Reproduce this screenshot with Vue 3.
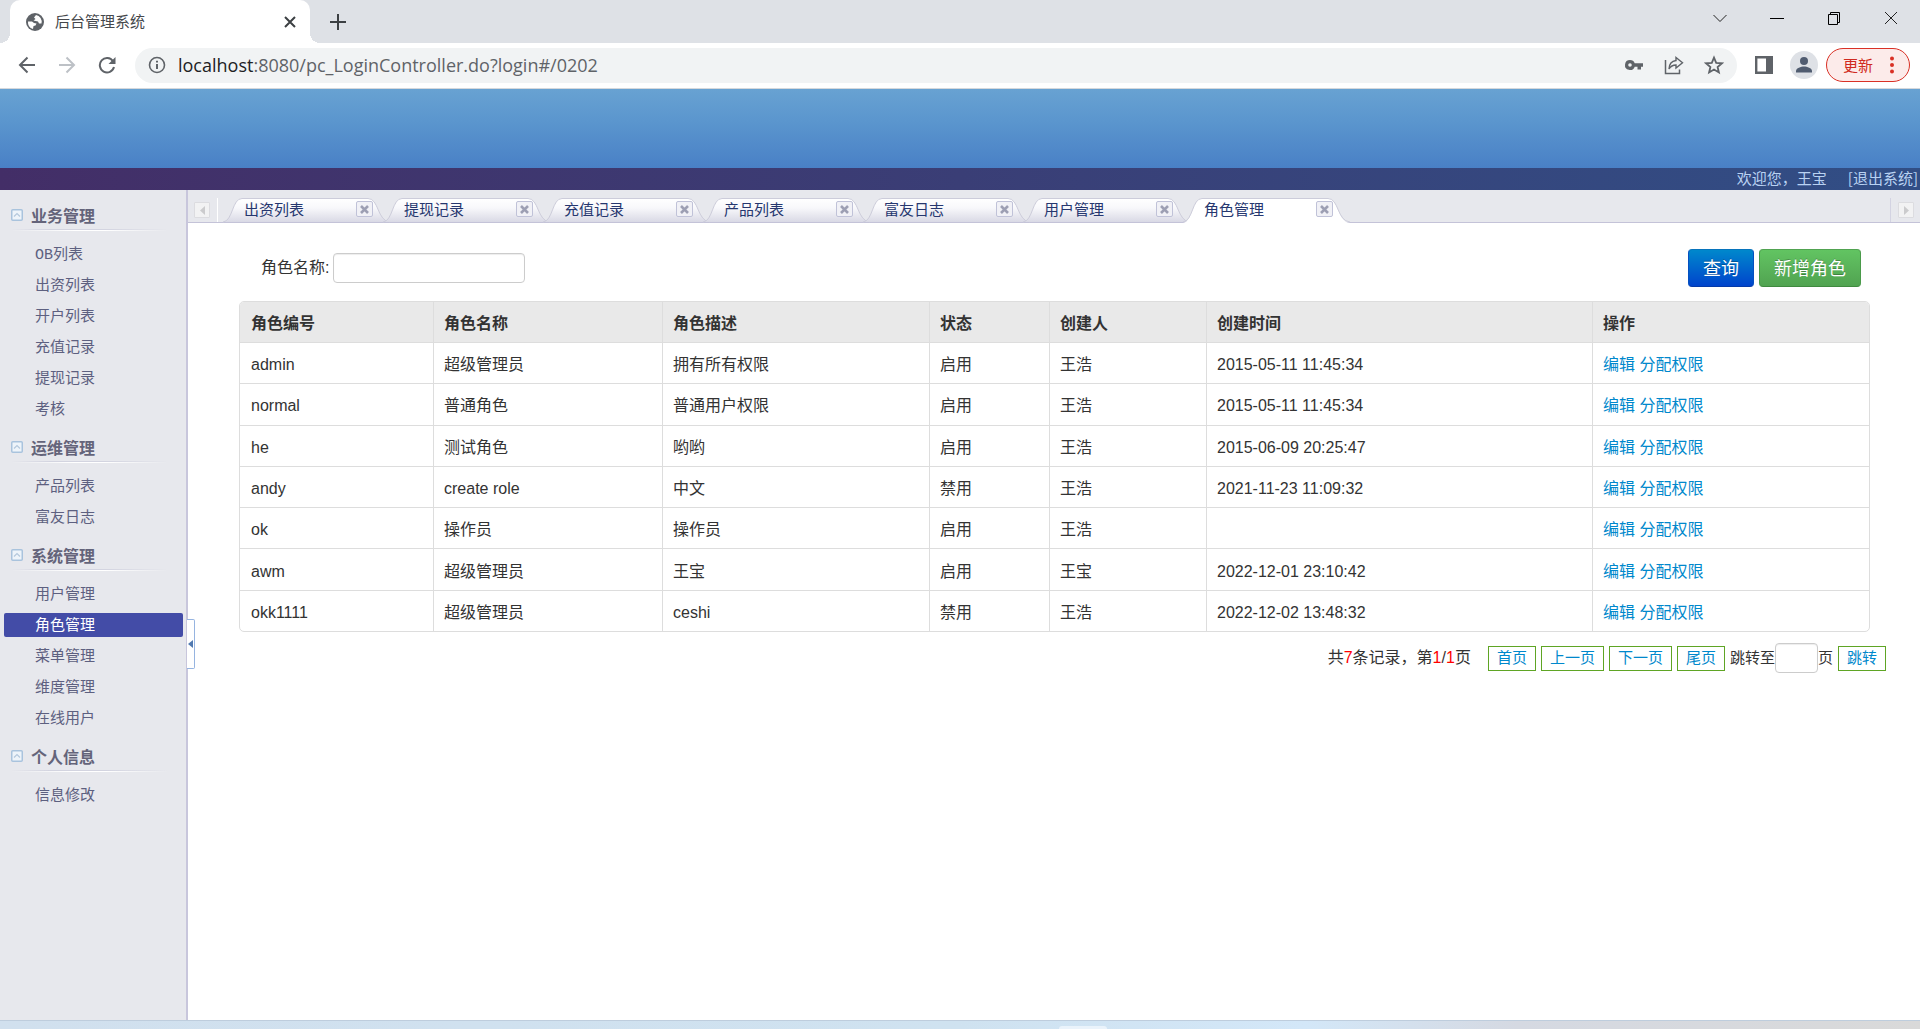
<script setup>
import { ref } from 'vue'

const keyword = ref('')
const page = ref('')

const menus = [
  { title: '业务管理', items: ['OB列表', '出资列表', '开户列表', '充值记录', '提现记录', '考核'] },
  { title: '运维管理', items: ['产品列表', '富友日志'] },
  { title: '系统管理', items: ['用户管理', '角色管理', '菜单管理', '维度管理', '在线用户'] },
  { title: '个人信息', items: ['信息修改'] },
]
const active = '角色管理'

const tabs = ['出资列表', '提现记录', '充值记录', '产品列表', '富友日志', '用户管理', '角色管理']

const columns = ['角色编号', '角色名称', '角色描述', '状态', '创建人', '创建时间', '操作']
const rows = [
  ['admin', '超级管理员', '拥有所有权限', '启用', '王浩', '2015-05-11 11:45:34'],
  ['normal', '普通角色', '普通用户权限', '启用', '王浩', '2015-05-11 11:45:34'],
  ['he', '测试角色', '哟哟', '启用', '王浩', '2015-06-09 20:25:47'],
  ['andy', 'create role', '中文', '禁用', '王浩', '2021-11-23 11:09:32'],
  ['ok', '操作员', '操作员', '启用', '王浩', ''],
  ['awm', '超级管理员', '王宝', '启用', '王宝', '2022-12-01 23:10:42'],
  ['okk1111', '超级管理员', 'ceshi', '禁用', '王浩', '2022-12-02 13:48:32'],
]
</script>

<template>
  <div class="screen">
    <div class="tabstrip">
      <div class="btab">
        <svg class="globe" width="18" height="18" viewBox="0 0 18 18">
          <circle cx="9" cy="9" r="9" fill="#5f6368" />
          <path d="M2 8.500 L6 8.500 L8 10 L10.500 10.500 L9.500 12.500 L7.500 13 L7 16 A7.200 7.200 0 0 1 2 8.500 Z M10 2 L8 4.500 L9.500 6 L7.500 7.500 L12 8.500 L13 10.500 L15.500 10.500 A7 7 0 0 0 10 2 Z" fill="#fff" />
        </svg>
        <span class="btitle">后台管理系统</span>
        <button class="plain" aria-label="关闭标签页">
          <svg width="12" height="12" viewBox="0 0 12 12"><path d="M1 1 L11 11 M11 1 L1 11" stroke="#3c4043" stroke-width="2" /></svg>
        </button>
      </div>
      <button class="plain newtab" aria-label="新标签页">
        <svg width="16" height="16" viewBox="0 0 16 16"><path d="M8 0 V16 M0 8 H16" stroke="#3c4043" stroke-width="2" /></svg>
      </button>
      <div class="winctl">
        <button class="plain" aria-label="搜索标签页"><svg width="14" height="14" viewBox="0 0 14 14"><path d="M.5 4 L7 10.500 L13.500 4" stroke="#222" fill="none" /></svg></button>
        <button class="plain" aria-label="最小化"><svg width="14" height="14" viewBox="0 0 14 14"><path d="M0 7.500 H14" stroke="#000" /></svg></button>
        <button class="plain" aria-label="还原"><svg width="14" height="14" viewBox="0 0 14 14"><path d="M1.500 3.500 H10.500 V13.500 H1.500 Z M3.500 3 V1.500 H12.500 V11.500 H11" stroke="#000" fill="none" /></svg></button>
        <button class="plain" aria-label="关闭"><svg width="14" height="14" viewBox="0 0 14 14"><path d="M1 1 L13 13 M13 1 L1 13" stroke="#222" /></svg></button>
      </div>
    </div>

    <div class="toolbar">
      <button class="plain" aria-label="后退"><svg width="18" height="18" viewBox="0 0 18 18"><path d="M17 9 H2 M9.500 1.500 L2 9 L9.500 16.500" stroke="#5f6368" stroke-width="2" fill="none" /></svg></button>
      <button class="plain" aria-label="前进"><svg width="18" height="18" viewBox="0 0 18 18"><path d="M1 9 H16 M8.500 1.500 L16 9 L8.500 16.500" stroke="#bdc1c6" stroke-width="2" fill="none" /></svg></button>
      <button class="plain" aria-label="刷新"><svg width="18" height="18" viewBox="0 0 18 18"><path d="M15 5.200 A7.200 7.200 0 1 0 16 11" stroke="#5f6368" stroke-width="2" fill="none" /><path d="M17.500 1 V8 H10.500 Z" fill="#5f6368" /></svg></button>
      <div class="omnibox">
        <svg width="18" height="18" viewBox="0 0 18 18"><circle cx="9" cy="9" r="7.500" stroke="#5f6368" stroke-width="1.600" fill="none" /><path d="M9 8 V13 M9 4.800 V6.600" stroke="#5f6368" stroke-width="2" /></svg>
        <span class="url"><b>localhost</b>:8080/pc_LoginController.do?login#/0202</span>
        <svg width="20" height="20" viewBox="0 0 20 20"><path d="M6 5 a5 5 0 1 0 4.700 6.700 H13.500 V14.500 H17 V11.700 H19 V8.300 H10.700 A5 5 0 0 0 6 5 Z M6 8.200 a1.800 1.800 0 1 1 0 3.600 a1.800 1.800 0 0 1 0-3.600 Z" fill="#5f6368" fill-rule="evenodd" /></svg>
        <svg width="20" height="20" viewBox="0 0 20 20"><path d="M1.500 5 V18.500 H15.500 V14.500" stroke="#5f6368" stroke-width="1.500" fill="none" /><path d="M12 2.500 L18.500 7.800 L12 13 V10 C8.500 10 6.500 11.500 5 14 C5.200 9.500 7.500 6 12 5.500 Z" stroke="#5f6368" stroke-width="1.400" fill="none" /></svg>
        <svg width="20" height="20" viewBox="0 0 20 20"><path d="M10 2.600 L12.200 7.800 L17.900 8.300 L13.600 12 L14.900 17.500 L10 14.600 L5.100 17.500 L6.400 12 L2.100 8.300 L7.800 7.800 Z" stroke="#5f6368" stroke-width="1.800" fill="none" /></svg>
      </div>
      <button class="plain panel" aria-label="侧边栏"><svg width="18" height="18" viewBox="0 0 18 18"><path d="M1.200 1.200 H16.800 V16.800 H1.200 Z" stroke="#5f6368" stroke-width="2.400" fill="none" /><path d="M11 0 H18 V18 H11 Z" fill="#5f6368" /></svg></button>
      <button class="plain" aria-label="用户"><svg width="28" height="28" viewBox="0 0 28 28"><circle cx="14" cy="14" r="14" fill="#dee1e6" /><circle cx="14" cy="10" r="4" fill="#505c70" /><path d="M6 21.500 V20 C6 17 11 15.500 14 15.500 S22 17 22 20 V21.500 Z" fill="#505c70" /></svg></button>
      <button class="update">更新<svg width="4" height="18" viewBox="0 0 4 18"><circle cx="2" cy="2.500" r="2" fill="#d93025" /><circle cx="2" cy="9" r="2" fill="#d93025" /><circle cx="2" cy="15.500" r="2" fill="#d93025" /></svg></button>
    </div>

    <header class="banner"></header>
    <div class="userbar">
      <span>欢迎您，王宝</span>
      <a href="#">[退出系统]</a>
    </div>

    <div class="body">
      <nav class="side">
        <section v-for="m in menus" :key="m.title">
          <h2>
            <svg width="12" height="12" viewBox="0 0 12 12"><rect x=".75" y=".75" width="10.500" height="10.500" rx="1" fill="#eef4fa" stroke="#a9c3dd" stroke-width="1.500" /><path d="M3 7.500 L6 4.500 L9 7.500" stroke="#b4c8dc" fill="none" stroke-width="1.200" /></svg>
            {{ m.title }}
          </h2>
          <ul>
            <li v-for="i in m.items" :key="i"><a href="#" :class="{ on: i === active }">{{ i }}</a></li>
          </ul>
        </section>
      </nav>

      <main class="main">
        <button class="handle" aria-label="收起菜单"><svg width="5" height="8" viewBox="0 0 5 8"><path d="M5 0 V8 L0 4 Z" fill="#5079b0" /></svg></button>
        <div class="tabs">
          <button class="arrow left" aria-label="向左滚动"><svg width="5" height="9" viewBox="0 0 5 9"><path d="M5 0 V9 L0 4.500 Z" fill="#cbcbcd" /></svg></button>
          <div class="tablist">
            <div v-for="t in tabs" :key="t" class="tab">
              <svg class="shape" width="168" height="25" viewBox="0 0 168 25">
                <defs>
                  <linearGradient id="tabfill" x1="0" y1="0" x2="0" y2="1">
                    <stop offset="0" stop-color="#fff" />
                    <stop offset=".4" stop-color="#f8f8fb" />
                    <stop offset="1" stop-color="#d9d9e5" />
                  </linearGradient>
                </defs>
                <path :d="t === active ? 'M0 25 C10 24 9 .5 19 .5 H145 C156 .5 154 24 167 25 Z' : 'M0 24 C10 23 9 .5 19 .5 H145 C156 .5 154 23 167 24 Z'" :fill="t === active ? '#fff' : 'url(#tabfill)'" />
                <path d="M0 24 C10 23 9 .5 19 .5 H145 C156 .5 154 23 167 24" fill="none" stroke="#ccccda" />
              </svg>
              <a href="#">{{ t }}</a>
              <button class="close" aria-label="关闭"><svg width="9" height="9" viewBox="0 0 9 9"><path d="M1 1 L8 8 M8 1 L1 8" stroke="#9d9fb3" stroke-width="2.600" /></svg></button>
            </div>
          </div>
          <button class="arrow right" aria-label="向右滚动"><svg width="5" height="9" viewBox="0 0 5 9"><path d="M0 0 V9 L5 4.500 Z" fill="#cbcbcd" /></svg></button>
        </div>

        <form class="search" @submit.prevent>
          <label for="role-name">角色名称:</label>
          <input id="role-name" v-model="keyword" type="text" />
          <button class="btn blue" type="submit">查询</button>
          <button class="btn green" type="button">新增角色</button>
        </form>

        <div class="tablewrap">
          <table>
            <colgroup>
              <col class="c1" /><col class="c2" /><col class="c3" /><col class="c4" /><col class="c5" /><col class="c6" /><col class="c7" />
            </colgroup>
            <thead>
              <tr><th v-for="c in columns" :key="c">{{ c }}</th></tr>
            </thead>
            <tbody>
              <tr v-for="r in rows" :key="r[0]">
                <td v-for="(v, n) in r" :key="n">{{ v }}</td>
                <td><a href="#">编辑</a> <a href="#">分配权限</a></td>
              </tr>
            </tbody>
          </table>
        </div>

        <div class="pager">
          <span class="total">共<em>7</em>条记录，第<em>1</em>/<em>1</em>页</span>
          <a class="pg" href="#">首页</a>
          <a class="pg" href="#">上一页</a>
          <a class="pg" href="#">下一页</a>
          <a class="pg" href="#">尾页</a>
          <label class="jump">跳转至<input v-model="page" type="text" />页</label>
          <a class="pg" href="#">跳转</a>
        </div>
      </main>
    </div>

    <footer class="taskbar"><span></span></footer>
  </div>
</template>

<style>
body { margin: 0; }
</style>

<style scoped>
.screen {
  display: flex;
  flex-direction: column;
  min-height: 100vh;
  background: #fff;
  color: #333;
  font: 16px/20px "Liberation Sans", "Noto Sans CJK SC", sans-serif;
}
.screen * { box-sizing: border-box; }
svg { display: block; flex: none; }
a { text-decoration: none; }
.plain { border: 0; padding: 0; background: none; flex: none; }

/* browser window */
.tabstrip { display: flex; height: 43px; background: #dee1e6; }
.btab {
  position: relative;
  display: flex;
  align-items: center;
  width: 300px;
  margin-left: 10px;
  padding: 0 14px 0 16px;
  border-radius: 10px 10px 0 0;
  background: #fff;
}
.btab::before, .btab::after {
  content: "";
  position: absolute;
  bottom: 0;
  left: -10px;
  width: 10px;
  height: 10px;
  background: radial-gradient(circle at 0 0, transparent 10px, #fff 10px);
}
.btab::after { left: 100%; background: radial-gradient(circle at 100% 0, transparent 10px, #fff 10px); }
.btitle { flex: 1; margin-left: 11px; font-size: 15px; color: #45484c; }
.newtab { margin-left: 20px; }
.winctl { display: flex; gap: 43px; margin: 11px 22px 0 auto; height: 14px; }
.toolbar {
  display: flex;
  align-items: center;
  height: 46px;
  padding: 0 10px 1px 18px;
  gap: 22px;
  border-bottom: 1px solid #d5d8dc;
  background: #fff;
}
.omnibox {
  display: flex;
  align-items: center;
  flex: 1;
  height: 35px;
  margin-left: -3px;
  padding: 0 13px;
  gap: 20px;
  border-radius: 18px;
  background: #f1f3f4;
}
.url {
  flex: 1;
  margin-left: -8px;
  font: 18px/24px "Open Sans", "Noto Sans", sans-serif;
  color: #5f6368;
}
.url b { font-weight: 400; color: #202124; }
.panel { margin: 0 -5px 0 -4px; }
.update {
  display: flex;
  align-items: center;
  justify-content: space-between;
  width: 84px;
  height: 34px;
  margin-left: -14px;
  padding: 0 15px 0 16px;
  border: 1px solid #d93025;
  border-radius: 17px;
  background: #fcebea;
  color: #d02a20;
  font: 15px/20px "Noto Sans CJK SC", sans-serif;
}

/* page header */
.banner { height: 79px; background: linear-gradient(#68a2d2, #5b96ce 40%, #4980c6); }
.userbar {
  display: flex;
  justify-content: flex-end;
  gap: 21px;
  height: 22px;
  padding-right: 2px;
  background: linear-gradient(90deg, #432e67, #314e85);
  color: #b9d2f2;
  font: 15px/20px "Noto Sans CJK SC", sans-serif;
}
.userbar a { color: inherit; }

/* sidebar */
.body { display: flex; flex: 1; }
.side {
  flex: none;
  width: 188px;
  padding-top: 11px;
  border-right: 2px solid #c8c6dc;
  background: #e7e8ed;
  font-family: "Noto Sans CJK SC", sans-serif;
}
.side h2 {
  display: flex;
  align-items: center;
  gap: 8px;
  height: 30px;
  margin: 0 18px 0 11px;
  padding-bottom: 2px;
  background: linear-gradient(90deg, transparent, #d3d4e0 25%, #d3d4e0 60%, transparent) 0 28px / 100% 1px no-repeat,
    linear-gradient(90deg, transparent, #fff 40%, #fff 60%, transparent) 0 29px / 100% 1px no-repeat;
  font-size: 16px;
  line-height: 28px;
  color: #64647a;
}
.side ul {
  display: flex;
  flex-direction: column;
  gap: 7px;
  margin: 0;
  padding: 11px 3px 12px 4px;
  list-style: none;
}
.side a {
  display: block;
  padding: 4px 0 0 31px;
  border-radius: 2px;
  font: 15px/20px "Liberation Mono", "Noto Sans CJK SC", monospace;
  color: #5d6080;
}
.side a.on { background: #434ca7; color: #fff; }

/* workspace */
.main { position: relative; flex: 1; min-width: 0; }
.handle {
  position: absolute;
  top: 429px;
  left: -1px;
  display: flex;
  align-items: center;
  width: 8px;
  height: 50px;
  padding: 0 1px;
  border: 1px solid #96b4e0;
  border-left: 0;
  border-radius: 0 2px 2px 0;
  background: #fff;
}
.tabs {
  display: flex;
  align-items: flex-end;
  height: 33px;
  padding: 0 6px;
  border-bottom: 1px solid #c4c3d8;
  background: #e7e8ed;
}
.tablist {
  display: flex;
  flex: 1;
  height: 24px;
  margin: 0 7px;
  padding-left: 5px;
  border-left: 1px solid #fff;
  border-right: 1px solid #d3d3e2;
}
.tab {
  position: relative;
  display: flex;
  align-items: center;
  justify-content: space-between;
  width: 160px;
  padding: 0 10px 2px 21px;
}
.shape { position: absolute; left: 0; top: 0; }
.tab a {
  position: relative;
  font: 15px/20px "Noto Sans CJK SC", sans-serif;
  color: #26376f;
}
.close {
  position: relative;
  display: flex;
  align-items: center;
  justify-content: center;
  width: 17px;
  height: 16px;
  padding: 0;
  border: 1px solid #c0c2d8;
  border-radius: 2px;
  background: #f1f1f6;
}
.arrow {
  display: flex;
  align-items: center;
  justify-content: center;
  width: 16px;
  height: 16px;
  margin-bottom: 4px;
  padding: 0;
  border: 1px solid #dcdce0;
  border-radius: 1px;
  background: #f2f2f3;
}

.search {
  display: flex;
  align-items: center;
  gap: 5px;
  padding: 26px 59px 14px 73px;
}
.search input {
  width: 192px;
  height: 30px;
  margin: 0 auto 0 -1px;
}
input {
  border: 1px solid #ccc;
  border-radius: 4px;
  background: #fff;
  box-shadow: inset 0 1px 1px rgba(0, 0, 0, 0.075);
  font: inherit;
}
.btn {
  height: 38px;
  padding: 0 14px 2px;
  border: 1px solid;
  border-radius: 4px;
  color: #fff;
  font: 18px/24px "Noto Sans CJK SC", sans-serif;
  text-shadow: 0 -1px 0 rgba(0, 0, 0, 0.25);
}
.blue { border-color: #0774bc #0550c0 #043aa8; background: linear-gradient(#08c, #04c); }
.green { border-color: #51a351 #4a9a4a #3f8a3f; background: linear-gradient(#62c462, #51a351); }

.tablewrap { padding: 0 50px 0 51px; }
table {
  width: 100%;
  height: 331px;
  table-layout: fixed;
  border: 1px solid #ddd;
  border-radius: 5px;
  border-collapse: separate;
  border-spacing: 0;
  overflow: hidden;
}
.c1 { width: 193px; }
.c2 { width: 229px; }
.c3 { width: 267px; }
.c4 { width: 120px; }
.c5 { width: 157px; }
.c6 { width: 386px; }
.c7 { width: 277px; }
th, td { height: 41px; padding: 4px 11px 0; text-align: left; }
th { height: 40px; background: #e9e9e9; font-weight: 700; }
td { border-top: 1px solid #ddd; }
th + th, td + td { border-left: 1px solid #ddd; padding-left: 10px; }
td a { color: #08c; }

.pager {
  display: flex;
  align-items: center;
  justify-content: flex-end;
  gap: 5px;
  padding: 11px 34px 0 0;
}
.total { margin-right: 12px; }
.total em { font-style: normal; color: #f00; }
.pg {
  padding: 0 8px 2px;
  border: 1px solid #5fa524;
  color: #08c;
  font-size: 15px;
  line-height: 21px;
}
.jump { display: flex; align-items: center; font-size: 15px; }
.jump input { width: 43px; height: 30px; padding: 4px 6px; }

.taskbar {
  display: flex;
  align-items: flex-end;
  height: 9px;
  padding-left: 1059px;
  border-top: 1px solid #becddd;
  background: linear-gradient(90deg, #d1e0ee, #cfe2f0 50%, #d3e7f8 68%, #d5d9e2 79%, #d9d9d9);
}
.taskbar span { width: 48px; height: 3px; border-radius: 3px 3px 0 0; background: #eaf3fb; }
</style>
